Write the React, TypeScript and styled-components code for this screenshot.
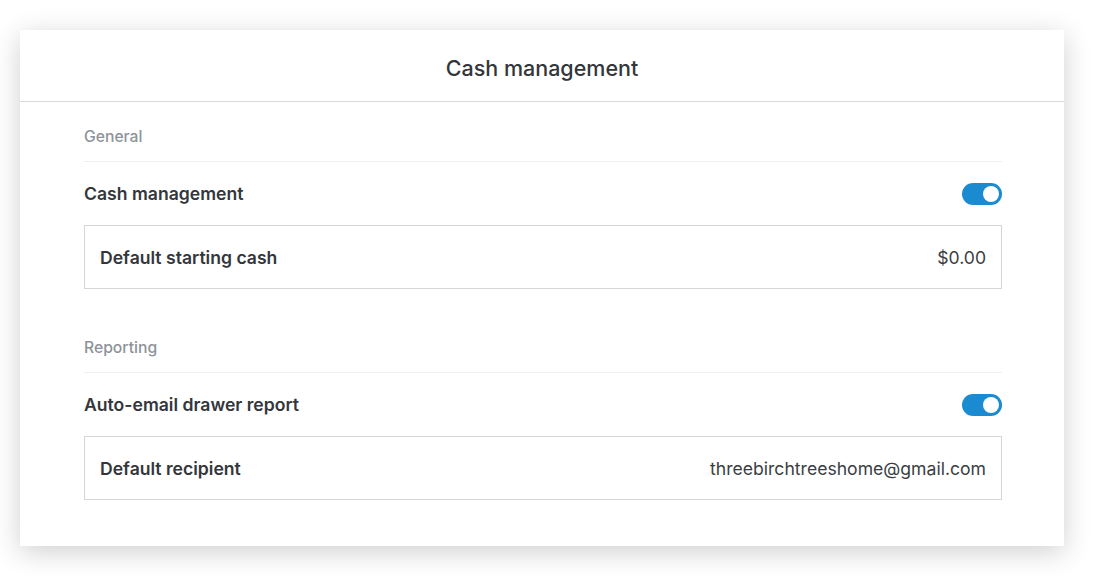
import React, { FC } from "react";
import styled, { createGlobalStyle } from "styled-components";

const GlobalStyle = createGlobalStyle`
  html, body {
    margin: 0;
    padding: 0;
    background: #ffffff;
    font-family: Inter, "Open Sans", "Liberation Sans", sans-serif;
    color: #3a3d42;
  }
`;

const Page = styled.div`
  padding: 30px 40px 30px 20px;
`;

const Card = styled.div`
  width: 1044px;
  background: #ffffff;
  box-shadow: 0 6px 26px rgba(0, 0, 0, 0.19);
  padding-bottom: 46px;
`;

const Header = styled.div`
  height: 72px;
  box-sizing: border-box;
  padding-top: 5px;
  display: flex;
  align-items: center;
  justify-content: center;
  border-bottom: 1px solid #d9d9d9;
  font-size: 21.5px;
  font-weight: 500;
  color: #33363b;
`;

const Body = styled.div`
  padding: 0 62px 0 64px;
`;

const Section = styled.div`
  & + & {
    margin-top: 24px;
  }
`;

const SectionLabel = styled.div`
  padding: 24px 0 13px;
  line-height: 22px;
  font-size: 15.7px;
  font-weight: 500;
  color: #8d939a;
  border-bottom: 1px solid #efefef;
`;

const ToggleRow = styled.div`
  height: 63px;
  display: flex;
  align-items: center;
  justify-content: space-between;
  font-size: 17.6px;
  font-weight: 600;
  color: #33363b;
`;

const Switch = styled.span<{ $on: boolean }>`
  width: 40px;
  height: 22px;
  border-radius: 11px;
  background: ${(p) => (p.$on ? "#1a8bd0" : "#c9ccd0")};
  display: flex;
  align-items: center;
  justify-content: ${(p) => (p.$on ? "flex-end" : "flex-start")};
  padding: 0 3px;
  box-sizing: border-box;

  &::after {
    content: "";
    width: 16px;
    height: 16px;
    border-radius: 50%;
    background: #ffffff;
  }
`;

const FieldBox = styled.div`
  height: 62px;
  border: 1px solid #d6d6d6;
  display: flex;
  align-items: center;
  justify-content: space-between;
  padding: 0 15px;
  font-size: 17.6px;
`;

const FieldLabel = styled.span`
  font-weight: 600;
  color: #33363b;
`;

const FieldValue = styled.span`
  font-weight: 400;
  color: #3a3d42;
`;

type SettingProps = {
  label: string;
  toggle: string;
  field: string;
  value: string;
};

const Setting: FC<SettingProps> = ({ label, toggle, field, value }) => (
  <Section>
    <SectionLabel>{label}</SectionLabel>
    <ToggleRow>
      {toggle}
      <Switch $on />
    </ToggleRow>
    <FieldBox>
      <FieldLabel>{field}</FieldLabel>
      <FieldValue>{value}</FieldValue>
    </FieldBox>
  </Section>
);

export default function App() {
  return (
    <>
      <GlobalStyle />
      <Page>
        <Card>
          <Header>Cash management</Header>
          <Body>
            <Setting
              label="General"
              toggle="Cash management"
              field="Default starting cash"
              value="$0.00"
            />
            <Setting
              label="Reporting"
              toggle="Auto-email drawer report"
              field="Default recipient"
              value="threebirchtreeshome@gmail.com"
            />
          </Body>
        </Card>
      </Page>
    </>
  );
}
